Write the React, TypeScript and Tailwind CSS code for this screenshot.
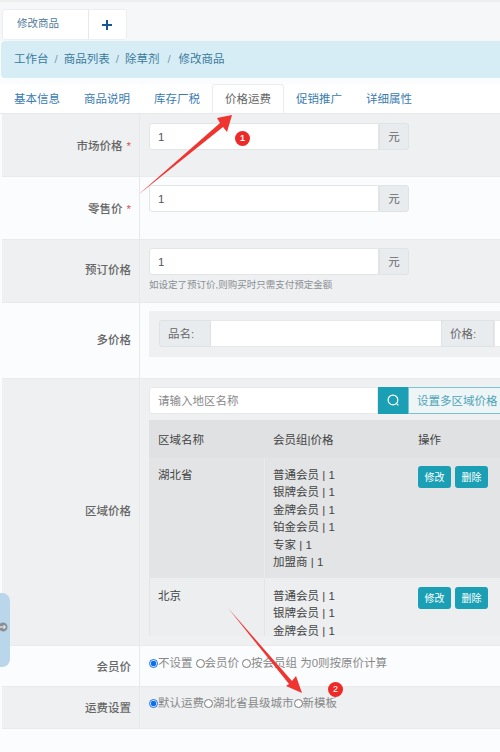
import React from "react";

const Label = ({ children, star, low }: { children: React.ReactNode; star?: boolean; low?: boolean }) => (
  <div className={`w-[138px] shrink-0 flex items-center justify-end pr-[8px] border-r border-[#e6e8ea] text-[11.5px] font-medium text-[#666] ${low ? "pt-[3px]" : ""}`}>
    <span>{children}</span>
    {star && <span className="ml-1 text-[#d9534f]">*</span>}
  </div>
);

const PriceInput = () => (
  <div className="flex w-[260px] h-[27px]">
    <div className="w-[230px] bg-white border border-[#e2e5e8] rounded-l-[3px] pl-[8px] pt-[2px] flex items-center text-[11.5px] text-[#555]">1</div>
    <div className="w-[30px] bg-[#e9ecef] border border-[#e0e3e6] rounded-r-[3px] pt-[2px] flex items-center justify-center text-[11.5px] text-[#666]">元</div>
  </div>
);

const Addon = ({ children, w }: { children: React.ReactNode; w: string }) => (
  <div className={`${w} shrink-0 bg-[#e9ecef] border border-[#dfe2e5] flex items-center pl-[8px] pt-[2px] text-[11.5px] text-[#666]`}>{children}</div>
);

const Radio = ({ checked, label }: { checked?: boolean; label: string }) => (
  <label className="inline-flex items-center">
    <input type="radio" readOnly checked={!!checked} className="m-0 w-[9px] h-[9px] accent-[#0b6ff0]" />
    <span>{label}</span>
  </label>
);

const ActionButtons = () => (
  <div className="flex gap-[4px]">
    <div className="w-[33px] h-[22px] rounded-[3px] bg-[#1a9fb5] text-white text-[10px] flex items-center justify-center">修改</div>
    <div className="w-[33px] h-[22px] rounded-[3px] bg-[#1a9fb5] text-white text-[10px] flex items-center justify-center">删除</div>
  </div>
);

export default function App() {
  return (
    <div
      className="relative w-[500px] h-[752px] overflow-hidden bg-[#fbfcfd] text-[#444]"
      style={{ fontFamily: '"Liberation Sans","Noto Sans CJK SC",sans-serif' }}
    >
      <div className="h-[2px] bg-[#eeeeee]" />
      {/* Tab strip */}
      <div className="h-[39px] bg-[#f6f7f8] pt-[7px] pl-[2px]">
        <div className="flex w-[125px] h-[31px] bg-white border border-[#eceef0] rounded-[3px]">
          <div className="w-[86px] flex items-center pl-[14px] pb-[2px] border-r border-[#e6e8ea] text-[10.5px] text-[#4f7a9c]">修改商品</div>
          <div className="flex-1 flex items-center justify-center pr-[2px]">
            <svg width="10" height="10" viewBox="0 0 10 10"><path d="M5 0v10M0 5h10" stroke="#14588f" strokeWidth="2" /></svg>
          </div>
        </div>
      </div>
      {/* Breadcrumb */}
      <div className="ml-[1px] h-[37px] bg-[#d7edf6] rounded-l-[4px] flex items-center pl-[13px] text-[11.5px] text-[#3a7a9c]">
        <span>工作台</span><span className="mx-[6px] text-[#7a9aab]">/</span>
        <span>商品列表</span><span className="mx-[6px] text-[#7a9aab]">/</span>
        <span>除草剂</span><span className="mx-[8px] text-[#7a9aab]">/</span>
        <span>修改商品</span>
      </div>
      {/* Tabs */}
      <div className="mt-[6px] h-[30px] flex items-stretch border-b border-[#e6e8ea] pl-[14px] bg-white text-[11.5px] text-[#3a7cb0]">
        <div className="w-[70px] flex items-center pt-[2px]">基本信息</div>
        <div className="w-[70px] flex items-center pt-[2px]">商品说明</div>
        <div className="w-[58px] flex items-center pt-[2px]">库存厂税</div>
        <div className="w-[72px] flex items-center justify-center pt-[2px] bg-white border border-b-0 border-[#eaecee] rounded-t-[3px] text-[#666]">价格运费</div>
        <div className="w-[82px] flex items-center pl-[12px] pt-[2px]">促销推广</div>
        <div className="flex items-center pt-[2px]">详细属性</div>
      </div>
      {/* Form */}
      <div className="ml-[2px] border-b border-[#e8eaec]">
        <div className="flex h-[62px] bg-[#eef0f1]">
          <Label low>市场价格<span className="ml-1 text-[#d9534f]">*</span></Label>
          <div className="pl-[9px] pt-[9px]"><PriceInput /></div>
        </div>
        <div className="flex h-[63px] bg-[#fbfcfe] border-t border-[#e8eaec]">
          <Label star low>零售价</Label>
          <div className="pl-[9px] pt-[8px]"><PriceInput /></div>
        </div>
        <div className="flex h-[63px] bg-[#eef0f1] border-t border-[#e8eaec]">
          <Label>预订价格</Label>
          <div className="pl-[9px] pt-[8px]">
            <PriceInput />
            <div className="mt-[3px] text-[9.5px] leading-[14px] text-[#8a8f94]">如设定了预订价,则购买时只需支付预定金额</div>
          </div>
        </div>
        <div className="flex h-[76px] bg-[#fbfcfe] border-t border-[#e8eaec]">
          <Label>多价格</Label>
          <div className="flex-1 min-w-0 pl-[9px] pt-[8px] overflow-hidden">
            <div className="h-[46px] bg-[#eef0f1] pl-[10px] pt-[9px] flex">
              <div className="flex h-[27px] w-[400px] shrink-0">
                <Addon w="w-[52px] rounded-l-[3px]">品名:</Addon>
                <div className="w-[230px] shrink-0 bg-white border-y border-[#e6e8ea]" />
                <Addon w="w-[53px]">价格:</Addon>
                <div className="flex-1 bg-white border border-[#e6e8ea]" />
              </div>
            </div>
          </div>
        </div>
        <div className="flex h-[267px] bg-[#eef0f1] border-t border-[#e8eaec]">
          <Label>区域价格</Label>
          <div className="flex-1 min-w-0 pl-[9px] pt-[8px] overflow-hidden">
            <div className="flex h-[27px] w-[370px] text-[11.5px]">
              <div className="w-[229px] shrink-0 bg-white border border-[#e6e8ea] rounded-l-[3px] pl-[8px] pt-[2px] flex items-center text-[#888]">请输入地区名称</div>
              <div className="w-[30px] shrink-0 bg-[#1a9fb5] flex items-center justify-center">
                <svg width="13" height="13" viewBox="0 0 24 24" fill="none" stroke="white" strokeWidth="2.2"><circle cx="11" cy="11" r="9" /><path d="M18 18l3 3" /></svg>
              </div>
              <div className="flex-1 bg-[#eef5f7] border border-[#7cc3d0] pl-[8px] pt-[2px] flex items-center text-[#4ea4b8] whitespace-nowrap overflow-hidden">设置多区域价格</div>
            </div>
            <div className="mt-[6px] h-[217px] overflow-hidden text-[11.5px] text-[#444]">
              <div className="flex h-[38px] pt-[3px] bg-[#dfe1e3] items-center">
                <div className="w-[115px] pl-[9px]">区域名称</div>
                <div className="w-[144px] pl-[9px]">会员组|价格</div>
                <div className="pl-[10px]">操作</div>
              </div>
              <div className="flex h-[120px] bg-[#e3e4e6]">
                <div className="w-[115px] pl-[9px] pt-[9px]">湖北省</div>
                <div className="w-[144px] pl-[8px] pt-[9px] leading-[17.4px] border-l border-[#e9eaec]">
                  <div>普通会员 | 1</div><div>银牌会员 | 1</div><div>金牌会员 | 1</div>
                  <div>铂金会员 | 1</div><div>专家 | 1</div><div>加盟商 | 1</div>
                </div>
                <div className="pl-[10px] pt-[8px]"><ActionButtons /></div>
              </div>
              <div className="flex h-[58px] bg-[#eceef0]">
                <div className="w-[115px] pl-[8px] pt-[10px] border-l border-[#e3e5e7]">北京</div>
                <div className="w-[144px] pl-[8px] pt-[10px] leading-[17.4px] border-l border-[#e3e5e7]">
                  <div>普通会员 | 1</div><div>银牌会员 | 1</div><div>金牌会员 | 1</div>
                </div>
                <div className="pl-[10px] pt-[9px]"><ActionButtons /></div>
              </div>
            </div>
          </div>
        </div>
        <div className="flex h-[41px] bg-[#fbfcfe] border-t border-[#e8eaec]">
          <Label low>会员价</Label>
          <div className="pl-[9px] pt-[9px] text-[11.5px] text-[#888] flex gap-[3px] h-fit whitespace-nowrap">
            <Radio checked label="不设置" />
            <Radio label="会员价" />
            <Radio label="按会员组 为0则按原价计算" />
          </div>
        </div>
        <div className="flex h-[42px] bg-[#eef0f1] border-t border-[#e8eaec]">
          <Label low>运费设置</Label>
          <div className="pl-[9px] pt-[8px] text-[11.5px] text-[#888] flex h-fit whitespace-nowrap">
            <Radio checked label="默认运费" />
            <Radio label="湖北省县级城市" />
            <Radio label="新模板" />
          </div>
        </div>
      </div>

      {/* Floating side handle */}
      <div className="absolute left-0 top-[593px] w-[10px] h-[74px] bg-[#b9d6ea] rounded-r-[8px] flex items-center">
        <svg width="8" height="10" viewBox="0 0 8 10" className="mt-[-6px]">
          <circle cx="3" cy="5" r="4.5" fill="#8a8f94" />
          <path d="M0 5h5M3.5 3l2 2-2 2" stroke="#fff" strokeWidth="1" fill="none" />
        </svg>
      </div>

      {/* Annotation overlay */}
      <svg className="absolute left-0 top-0" width="500" height="752" viewBox="0 0 500 752">
        <polygon points="138,195 220,123 217,118 232,115 227,132 223,127" fill="#f0342f" />
        <polygon points="228,608 292,681 296,676 302,693 286,686 289,684" fill="#f0342f" />
      </svg>
      <div className="absolute left-[235px] top-[131px] w-[15px] h-[15px] rounded-full bg-[#ee2a28] text-white text-[9px] font-bold flex items-center justify-center">1</div>
      <div className="absolute left-[328px] top-[682px] w-[15px] h-[15px] rounded-full bg-[#ee2a28] text-white text-[9px] flex items-center justify-center">2</div>
    </div>
  );
}
